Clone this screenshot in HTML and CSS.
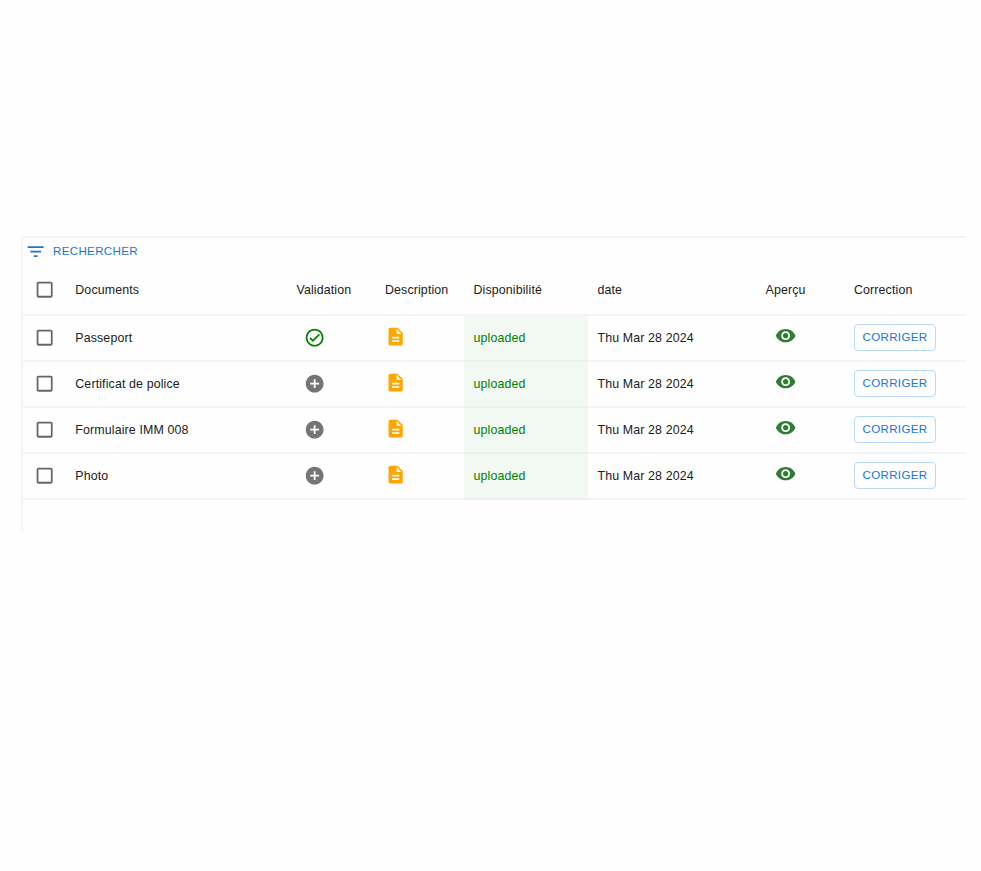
FILE: index.html
```html
<!DOCTYPE html>
<html lang="fr">
<head>
<meta charset="utf-8">
<title>Documents</title>
<link rel="stylesheet" href="styles.css">
</head>
<body>
<svg width="0" height="0" class="sprite" aria-hidden="true">
  <symbol id="box" viewBox="0 0 24 24"><path d="M19 5v14H5V5h14m0-2H5c-1.1 0-2 .9-2 2v14c0 1.1.9 2 2 2h14c1.1 0 2-.9 2-2V5c0-1.1-.9-2-2-2z"/></symbol>
  <symbol id="filter" viewBox="0 0 24 24"><path d="M10 18h4v-2h-4v2zM3 6v2h18V6H3zm3 7h12v-2H6v2z"/></symbol>
  <symbol id="check" viewBox="0 0 24 24"><path d="M12 2C6.48 2 2 6.48 2 12s4.48 10 10 10 10-4.480 10-10S17.520 2 12 2zm0 18c-4.410 0-8-3.590-8-8s3.590-8 8-8 8 3.590 8 8-3.590 8-8 8zm4.590-12.420L10 14.170l-2.590-2.580L6 13l4 4 8-8z"/></symbol>
  <symbol id="plus" viewBox="0 0 24 24"><path d="M12 2C6.480 2 2 6.480 2 12s4.480 10 10 10 10-4.480 10-10S17.520 2 12 2zm5 11h-4v4h-2v-4H7v-2h4V7h2v4h4v2z"/></symbol>
  <symbol id="doc" viewBox="0 0 24 24"><path d="M14 2H6c-1.100 0-1.990.9-1.990 2L4 20c0 1.100.890 2 1.990 2H18c1.100 0 2-.9 2-2V8l-6-6zm2 16H8v-2h8v2zm0-4H8v-2h8v2zm-3-5V3.500L18.500 9H13z"/></symbol>
  <symbol id="eye" viewBox="0 0 24 24"><path d="M12 4.500C7 4.500 2.730 7.610 1 12c1.730 4.390 6 7.500 11 7.500s9.270-3.110 11-7.500c-1.730-4.390-6-7.500-11-7.500zM12 17c-2.760 0-5-2.240-5-5s2.240-5 5-5 5 2.240 5 5-2.240 5-5 5zm0-8c-1.660 0-3 1.340-3 3s1.340 3 3 3 3-1.340 3-3-1.340-3-3-3z"/></symbol>
</svg>
<main class="grid">
  <div class="toolbar"><svg class="icon"><use href="#filter"/></svg><span>RECHERCHER</span></div>
  <div class="row head">
    <div class="select"><svg class="icon"><use href="#box"/></svg></div>
    <div>Documents</div><div>Validation</div><div>Description</div><div>Disponibilité</div><div>date</div><div>Aperçu</div><div>Correction</div>
  </div>
  <div class="row">
    <div class="select"><svg class="icon"><use href="#box"/></svg></div>
    <div>Passeport</div>
    <div class="valid ok"><svg class="icon"><use href="#check"/></svg></div>
    <div class="desc"><svg class="icon"><use href="#doc"/></svg></div>
    <div class="status">uploaded</div><div>Thu Mar 28 2024</div>
    <div class="view"><svg class="icon"><use href="#eye"/></svg></div>
    <div><button class="fix">CORRIGER</button></div>
  </div>
  <div class="row">
    <div class="select"><svg class="icon"><use href="#box"/></svg></div>
    <div>Certificat de police</div>
    <div class="valid"><svg class="icon"><use href="#plus"/></svg></div>
    <div class="desc"><svg class="icon"><use href="#doc"/></svg></div>
    <div class="status">uploaded</div><div>Thu Mar 28 2024</div>
    <div class="view"><svg class="icon"><use href="#eye"/></svg></div>
    <div><button class="fix">CORRIGER</button></div>
  </div>
  <div class="row">
    <div class="select"><svg class="icon"><use href="#box"/></svg></div>
    <div>Formulaire IMM 008</div>
    <div class="valid"><svg class="icon"><use href="#plus"/></svg></div>
    <div class="desc"><svg class="icon"><use href="#doc"/></svg></div>
    <div class="status">uploaded</div><div>Thu Mar 28 2024</div>
    <div class="view"><svg class="icon"><use href="#eye"/></svg></div>
    <div><button class="fix">CORRIGER</button></div>
  </div>
  <div class="row">
    <div class="select"><svg class="icon"><use href="#box"/></svg></div>
    <div>Photo</div>
    <div class="valid"><svg class="icon"><use href="#plus"/></svg></div>
    <div class="desc"><svg class="icon"><use href="#doc"/></svg></div>
    <div class="status">uploaded</div><div>Thu Mar 28 2024</div>
    <div class="view"><svg class="icon"><use href="#eye"/></svg></div>
    <div><button class="fix">CORRIGER</button></div>
  </div>
</main>
</body>
</html>
```
FILE: styles.css
```css
* { box-sizing: border-box; }
html { background: #fefefe; }
body {
  margin: 0;
  padding: 236px 15px 0 21px;
  font: 12.4px/18px "Liberation Sans", Arial, sans-serif;
  letter-spacing: 0.13px;
  color: #212121;
}
.sprite { display: none; }
.grid {
  height: 295px;
  border-top: 2px solid #f3f3f3;
  border-left: 2px solid #f5f5f5;
  border-top-left-radius: 4px;
}
.icon {
  display: block;
  flex: none;
  width: 21.3px;
  height: 21.3px;
  fill: currentColor;
}
.toolbar {
  display: flex;
  align-items: center;
  gap: 6.4px;
  height: 28px;
  padding: 0 0 2px 2.3px;
  font-size: 11.6px;
  letter-spacing: 0.32px;
  color: #1976d2;
}
.toolbar .icon { margin-top: 1px; }
.row {
  display: grid;
  grid-template-columns: 43.3px 221.2px 88.5px 88.5px 124px 168px 88.5px 1fr;
  height: 46px;
}
.row > div {
  display: flex;
  align-items: center;
  padding: 0 9px;
  border-bottom: 2px solid #f4f4f4;
}
.head { height: 50px; }
.row .select {
  justify-content: flex-start;
  padding: 0 0 0 10.5px;
  color: #666;
}
.row .valid { padding: 0 0 0 16.3px; color: #757575; }
.row .ok { color: #008000; }
.row .desc { padding: 0 0 3.4px 9px; color: #ffa500; }
.row .status {
  background: #f2f8f2;
  border-bottom-color: #ebf1eb;
  color: #008000;
}
.row .view { padding: 0 0 4px 18.4px; color: #2e7d32; }
.fix {
  flex: none;
  width: 82px;
  height: 27px;
  margin-bottom: 1px;
  padding: 0 0 1px;
  border: 1px solid #bad9f7;
  border-radius: 4px;
  background: transparent;
  font: 11.6px/20px "Liberation Sans", Arial, sans-serif;
  letter-spacing: 0.32px;
  color: #1976d2;
}
```
